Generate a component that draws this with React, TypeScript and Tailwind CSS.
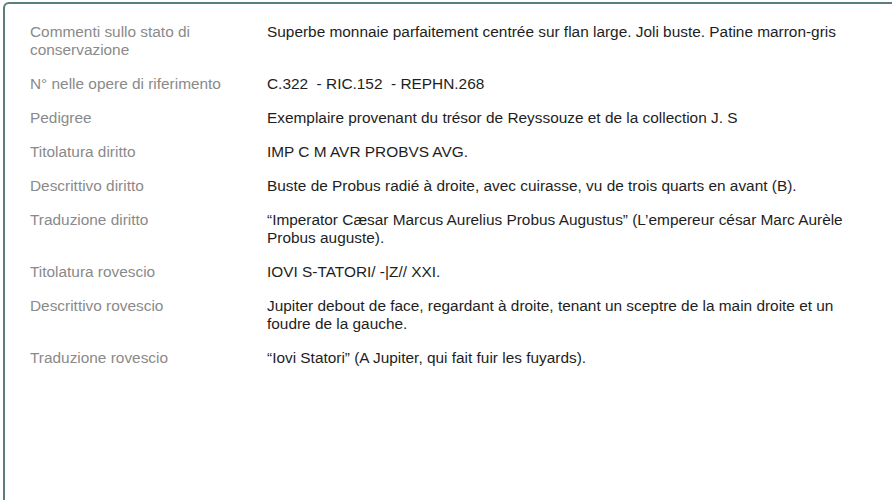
const rows: [string, string][] = [
  ["Commenti sullo stato di conservazione", "Superbe monnaie parfaitement centrée sur flan large. Joli buste. Patine marron-gris"],
  ["N° nelle opere di riferimento", "C.322\u00a0 - RIC.152\u00a0 - REPHN.268"],
  ["Pedigree", "Exemplaire provenant du trésor de Reyssouze et de la collection J. S"],
  ["Titolatura diritto", "IMP C M AVR PROBVS AVG."],
  ["Descrittivo diritto", "Buste de Probus radié à droite, avec cuirasse, vu de trois quarts en avant (B)."],
  ["Traduzione diritto", "“Imperator Cæsar Marcus Aurelius Probus Augustus” (L’empereur césar Marc Aurèle Probus auguste)."],
  ["Titolatura rovescio", "IOVI S-TATORI/ -|Z// XXI."],
  ["Descrittivo rovescio", "Jupiter debout de face, regardant à droite, tenant un sceptre de la main droite et un foudre de la gauche."],
  ["Traduzione rovescio", "“Iovi Statori” (A Jupiter, qui fait fuir les fuyards)."],
];

const App = () => {
  return (
    <div className="h-[500px] overflow-hidden bg-white pl-[3px] pt-[2px] font-['Liberation_Sans',Arial,sans-serif] text-[15.4px] leading-[18px]">
      <div className="h-full border-l-2 border-t-2 border-[#5d7c7c] rounded-tl-[6px] pl-[25px] pt-[19px]">
        <div className="grid grid-cols-[237px_582px] gap-y-[16px]">
          {rows.map(([label, value]) => (
            <div key={label} className="contents">
              <div className="text-[#8a8a8a] pr-4">{label}</div>
              <div className="text-[#1e1e1e]">{value}</div>
            </div>
          ))}
        </div>
      </div>
    </div>
  );
};

export default App;
